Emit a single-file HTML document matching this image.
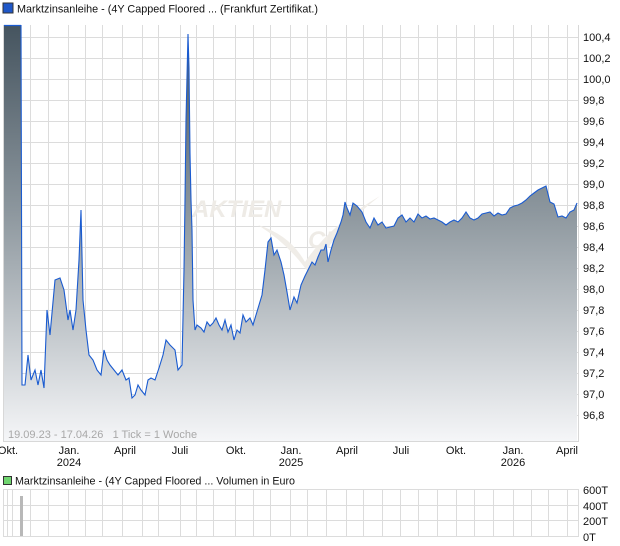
<!DOCTYPE html>
<html><head><meta charset="utf-8"><style>
html,body{margin:0;padding:0;background:#fff;width:620px;height:546px;overflow:hidden}
svg{display:block;font-family:"Liberation Sans",sans-serif}
</style></head><body>
<svg width="620" height="546" viewBox="0 0 620 546">
<defs>
<linearGradient id="g" x1="0" y1="25" x2="0" y2="441" gradientUnits="userSpaceOnUse">
<stop offset="0" stop-color="#45545f"/><stop offset="0.45" stop-color="#8d979e"/><stop offset="1" stop-color="#f5f6f8"/>
</linearGradient>
</defs>
<rect x="3" y="3" width="10" height="10" fill="#1f57c8" stroke="#333" stroke-width="1"/>
<text x="17" y="12.5" font-size="11" fill="#111" textLength="301" lengthAdjust="spacingAndGlyphs">Marktzinsanleihe - (4Y Capped Floored ... (Frankfurt Zertifikat.)</text>
<g stroke="#dcdcdc" stroke-width="1" id="vg">
<path d="M12.5 25V441M30.5 25V441M48.5 25V441M68.5 25V441M85.5 25V441M102.5 25V441M122.5 25V441M142.5 25V441M158.5 25V441M180.5 25V441M196.5 25V441M213.5 25V441M235.5 25V441M253.5 25V441M270.5 25V441M290.5 25V441M307.5 25V441M326.5 25V441M346.5 25V441M363.5 25V441M382.5 25V441M400.5 25V441M418.5 25V441M437.5 25V441M456.5 25V441M474.5 25V441M493.5 25V441M513.5 25V441M531.5 25V441M548.5 25V441M567.5 25V441"/>
<path d="M4 37.5H578M4 58.5H578M4 79.5H578M4 100.5H578M4 121.5H578M4 142.5H578M4 163.5H578M4 184.5H578M4 205.5H578M4 226.5H578M4 247.5H578M4 268.5H578M4 289.5H578M4 310.5H578M4 331.5H578M4 352.5H578M4 373.5H578M4 394.5H578M4 415.5H578"/>
</g>
<text x="192" y="217" font-size="24" font-style="italic" fill="#eeebe6" font-weight="bold">AKTIEN</text>
<path d="M258 225 Q290 235 305 262 Q330 225 380 196 Q335 230 310 275 Q290 245 258 225Z" fill="#f0ede8"/>
<text x="308" y="248" font-size="24" font-style="italic" fill="#eeebe6" font-weight="bold">CH</text>
<path id="d" d="M4 441 L4 25 L21 25 L22 385 L25 385 L28 355 L31 380 L35 370 L38 385 L41 370 L44 388 L47 310 L50 335 L55 280 L60 278 L64 290 L68 320 L70 310 L73 330 L76 310 L79 260 L81 210 L83 300 L86 330 L89 355 L93 360 L97 370 L101 375 L104 350 L107 360 L110 365 L114 370 L118 375 L122 370 L126 380 L129 378 L132 398 L135 395 L138 385 L141 390 L145 395 L148 380 L151 378 L155 380 L159 368 L163 355 L166 340 L170 345 L175 350 L178 370 L182 365 L184 270 L185 200 L186 120 L188 34 L189 68 L190 153 L191 200 L192 230 L193 300 L195 330 L197 325 L201 328 L204 332 L207 322 L210 326 L213 323 L216 318 L219 325 L222 330 L225 320 L228 332 L231 325 L234 340 L237 330 L240 333 L243 315 L246 322 L250 318 L253 325 L256 315 L259 305 L262 295 L265 270 L268 242 L271 238 L274 255 L277 250 L281 262 L284 275 L287 292 L290 310 L294 297 L297 303 L301 285 L305 276 L308 270 L312 262 L315 265 L318 257 L321 250 L324 250 L326 244 L328 262 L331 250 L334 240 L337 233 L341 222 L343 215 L345 202 L347 208 L350 215 L353 203 L357 206 L362 212 L366 222 L370 228 L374 218 L378 225 L382 222 L386 228 L390 227 L394 226 L398 218 L402 215 L406 222 L410 218 L414 222 L418 214 L422 218 L426 216 L430 219 L434 218 L438 220 L442 222 L446 225 L450 222 L454 220 L458 222 L462 218 L466 212 L470 218 L474 220 L478 218 L482 214 L486 213 L490 212 L494 216 L498 213 L502 215 L506 214 L510 208 L514 206 L518 205 L522 203 L526 200 L530 196 L534 193 L538 190 L542 188 L546 186 L550 202 L554 204 L558 217 L562 216 L566 218 L570 212 L574 210 L577 203 L577 441Z" fill="url(#g)"/>
<path d="M21 25 L22 385 L25 385 L28 355 L31 380 L35 370 L38 385 L41 370 L44 388 L47 310 L50 335 L55 280 L60 278 L64 290 L68 320 L70 310 L73 330 L76 310 L79 260 L81 210 L83 300 L86 330 L89 355 L93 360 L97 370 L101 375 L104 350 L107 360 L110 365 L114 370 L118 375 L122 370 L126 380 L129 378 L132 398 L135 395 L138 385 L141 390 L145 395 L148 380 L151 378 L155 380 L159 368 L163 355 L166 340 L170 345 L175 350 L178 370 L182 365 L184 270 L185 200 L186 120 L188 34 L189 68 L190 153 L191 200 L192 230 L193 300 L195 330 L197 325 L201 328 L204 332 L207 322 L210 326 L213 323 L216 318 L219 325 L222 330 L225 320 L228 332 L231 325 L234 340 L237 330 L240 333 L243 315 L246 322 L250 318 L253 325 L256 315 L259 305 L262 295 L265 270 L268 242 L271 238 L274 255 L277 250 L281 262 L284 275 L287 292 L290 310 L294 297 L297 303 L301 285 L305 276 L308 270 L312 262 L315 265 L318 257 L321 250 L324 250 L326 244 L328 262 L331 250 L334 240 L337 233 L341 222 L343 215 L345 202 L347 208 L350 215 L353 203 L357 206 L362 212 L366 222 L370 228 L374 218 L378 225 L382 222 L386 228 L390 227 L394 226 L398 218 L402 215 L406 222 L410 218 L414 222 L418 214 L422 218 L426 216 L430 219 L434 218 L438 220 L442 222 L446 225 L450 222 L454 220 L458 222 L462 218 L466 212 L470 218 L474 220 L478 218 L482 214 L486 213 L490 212 L494 216 L498 213 L502 215 L506 214 L510 208 L514 206 L518 205 L522 203 L526 200 L530 196 L534 193 L538 190 L542 188 L546 186 L550 202 L554 204 L558 217 L562 216 L566 218 L570 212 L574 210 L577 203" fill="none" stroke="#1a5bd0" stroke-width="1.1"/>
<path d="M4 25.5H21" stroke="#1a5bd0" stroke-width="1.2"/>
<path d="M3.5 25V441.5H578.5V25" fill="none" stroke="#d8d8d8"/>
<g font-size="11" fill="#111">
<text x="583" y="41">100,4</text><text x="583" y="62">100,2</text><text x="583" y="83">100,0</text><text x="583" y="104">99,8</text><text x="583" y="125">99,6</text><text x="583" y="146">99,4</text><text x="583" y="167">99,2</text><text x="583" y="188">99,0</text><text x="583" y="209">98,8</text><text x="583" y="230">98,6</text><text x="583" y="251">98,4</text><text x="583" y="272">98,2</text><text x="583" y="293">98,0</text><text x="583" y="314">97,8</text><text x="583" y="335">97,6</text><text x="583" y="356">97,4</text><text x="583" y="377">97,2</text><text x="583" y="398">97,0</text><text x="583" y="419">96,8</text>
</g>
<text x="8" y="438" font-size="11" fill="#a8a8a8">19.09.23 - 17.04.26&#160;&#160;&#160;1 Tick = 1 Woche</text>
<g font-size="11" fill="#111" text-anchor="middle">
<text x="8" y="454">Okt.</text><text x="69" y="454">Jan.</text><text x="69" y="466">2024</text><text x="125" y="454">April</text><text x="180" y="454">Juli</text><text x="236" y="454">Okt.</text><text x="291" y="454">Jan.</text><text x="291" y="466">2025</text><text x="347" y="454">April</text><text x="401" y="454">Juli</text><text x="456" y="454">Okt.</text><text x="513" y="454">Jan.</text><text x="513" y="466">2026</text><text x="567" y="454">April</text>
</g>
<rect x="3.5" y="476.5" width="8" height="8" fill="#6fd56f" stroke="#333"/>
<text x="15" y="484.5" font-size="11" fill="#111" textLength="280" lengthAdjust="spacingAndGlyphs">Marktzinsanleihe - (4Y Capped Floored ... Volumen in Euro</text>
<g stroke="#dcdcdc">
<path d="M12.5 489V536M30.5 489V536M48.5 489V536M68.5 489V536M85.5 489V536M102.5 489V536M122.5 489V536M142.5 489V536M158.5 489V536M180.5 489V536M196.5 489V536M213.5 489V536M235.5 489V536M253.5 489V536M270.5 489V536M290.5 489V536M307.5 489V536M326.5 489V536M346.5 489V536M363.5 489V536M382.5 489V536M400.5 489V536M418.5 489V536M437.5 489V536M456.5 489V536M474.5 489V536M493.5 489V536M513.5 489V536M531.5 489V536M548.5 489V536M567.5 489V536"/>
<path d="M4 505.5H578M4 520.5H578"/>
<path d="M3.5 489.5H578.5V536.5H3.5Z" fill="none"/>
<path d="M7.5 489V536" />
</g>
<rect x="20" y="496" width="3" height="40" fill="#b8b8b8"/>
<g font-size="11" fill="#111">
<text x="583" y="494">600T</text><text x="583" y="510">400T</text><text x="583" y="525">200T</text><text x="583" y="541">0T</text>
</g>
</svg>
</body></html>
